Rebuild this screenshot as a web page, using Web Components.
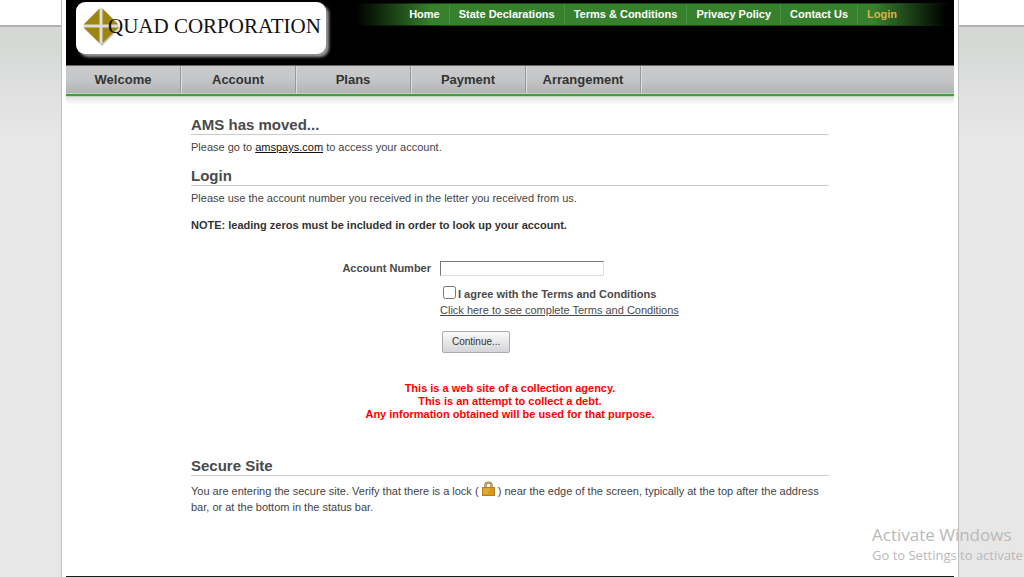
<!DOCTYPE html>
<html lang="en">
<head>
<meta charset="utf-8">
<title>Quad Corporation - Login</title>
<style>
html, body { margin: 0; }
body { font: 11px/16px "Liberation Sans", Arial, sans-serif; color: #444; background: #e7e7e7; }
</style>
</head>
<body>
<quad-page>
  <quad-header slot="header"></quad-header>
  <quad-nav slot="header"></quad-nav>
  <quad-section heading="AMS has moved...">Please go to <quad-link href="#amspays">amspays.com</quad-link> to access your account.</quad-section>
  <quad-section heading="Login">Please use the account number you received in the letter you received from us.</quad-section>
  <quad-login></quad-login>
  <quad-section heading="Secure Site" wide>You are entering the secure site. Verify that there is a lock ( <quad-lock></quad-lock> ) near the edge of the screen, typically at the top after the address <wbr>bar, or at the bottom in the status bar.</quad-section>
</quad-page>
<activation-note></activation-note>
<script>
function define(name, html) {
  const template = document.createElement('template');
  template.innerHTML = html;
  customElements.define(name, class extends HTMLElement {
    constructor() {
      super();
      this.attachShadow({ mode: 'open' }).append(template.content.cloneNode(true));
    }
    connectedCallback() {
      const title = this.shadowRoot.querySelector('[data-heading]');
      if (title) title.textContent = this.getAttribute('heading');
      const link = this.shadowRoot.querySelector('[data-link]');
      if (link) link.href = this.getAttribute('href');
    }
  });
}

define('quad-page', `<style>
:host { display: block; box-sizing: border-box; min-height: 100vh; padding-right: 4px;
  background: linear-gradient(#fff 25px, #adadad 25px, #b4b4b4 27px, #d6d8d6 27px, #d6d8d5 45px, #dadddb 70px, #e1e1e1 100px, #e7e7e7 140px); }
.shell { display: flex; flex-direction: column; box-sizing: border-box; min-height: 100vh; max-width: 898px; margin: 0 auto; padding: 0 4px; background: #fff; border: solid #c0c0c0; border-width: 0 1px; }
main { max-width: 638px; width: 100%; margin: 0 auto; padding: 10px 0 24px; }
footer { height: 1px; margin-top: auto; background: #1a1a1a; }
</style>
<div class="shell"><header><slot name="header"></slot></header><main><slot></slot></main><footer></footer></div>`);

define('quad-header', `<style>
:host { display: flex; justify-content: space-between; align-items: flex-start; height: 65px; background: #000; }
.logo { display: flex; align-items: center; box-sizing: border-box; width: 250px; height: 52px; margin: 2px 0 0 10px; padding: 0 0 4px 6px; border-radius: 9px; background: #fff; box-shadow: 3px 3px 3px #999; text-decoration: none; color: #111; font: 21px/24px "Liberation Serif", serif; white-space: nowrap; }
svg { flex: none; width: 38px; height: 40px; margin-right: -12px; }
b { position: relative; font-weight: 400; }
nav { display: flex; margin-top: 3px; padding: 0 48px 0 44px; border: solid #1d4a17; border-width: 1px 0; border-image: linear-gradient(90deg, #000, #1d4a17 15%, #1d4a17 90%, #000) 1; background: linear-gradient(90deg, #000, #37802d 75px, #37802d calc(100% - 80px), #000 calc(100% - 8px)); }
nav a { padding: 0 9px; font: bold 11px/21px "Liberation Sans", Arial, sans-serif; color: #fff; text-decoration: none; white-space: nowrap; }
nav a + a { border-left: 1px solid #4b9142; }
nav a.on { color: #dcb44a; }
</style>
<a class="logo" href="#home"><svg viewBox="0 0 38 40" aria-hidden="true">
<path d="M20 4 38 22 20 40 2 22Z" fill="#aaa" opacity=".7"/>
<path d="M19 1 37 20 19 38 1 20Z" fill="#ddd"/>
<path d="M17.500 2.500V18.500H1.500Z M20.500 2.500V18.500H36.500Z M17.500 37V21.500H1.500Z M20.500 37V21.500H36.500Z" fill="#9c8511"/></svg><b>QUAD CORPORATION</b></a>
<nav><a href="#home">Home</a><a href="#state">State Declarations</a><a href="#terms">Terms &amp; Conditions</a><a href="#privacy">Privacy Policy</a><a href="#contact">Contact Us</a><a href="#login" class="on">Login</a></nav>`);

define('quad-nav', `<style>
:host { display: block; }
nav { display: flex; border-top: 1px solid #666; background: linear-gradient(#cacbcc, #c5c6c7 50%, #b2b3b5); }
a { flex: 0 1 114px; border-right: 1px solid #999; box-shadow: 1px 0 #ddd; text-align: center; font: bold 13px/27px "Liberation Sans", Arial, sans-serif; color: #333; text-decoration: none; }
.line { height: 2px; border-top: 1px solid #bddabb; background: #3f9d3d; border-bottom: 1px solid #bddabb; }
.shade { height: 8px; background: linear-gradient(#e3e3e3, #fff); }
</style>
<nav><a href="#welcome">Welcome</a><a href="#account">Account</a><a href="#plans">Plans</a><a href="#payment">Payment</a><a href="#arrangement">Arrangement</a></nav>
<div class="line"></div><div class="shade"></div>`);

define('quad-section', `<style>
:host { display: block; }
h2 { margin: 0; border-bottom: 1px solid #ccc; font-size: 15px; line-height: 19px; color: #4a4a4a; }
p { margin: 4px 0 11px; }
:host([wide]) p { margin-top: 7px; }
</style><h2 data-heading></h2><p><slot></slot></p>`);

define('quad-link', `<style>a { color: #111; }</style><a data-link><slot></slot></a>`);

define('quad-lock', `<style>
:host { display: inline-block; width: 13px; height: 15px; margin: -4px 0 -1px; vertical-align: baseline; }
svg { display: block; }
</style><svg width="13" height="15" viewBox="0 0 13 15" role="img" aria-label="lock">
<path d="M3.500 7V4C3.500 .8 9.500 .8 9.500 4V7" fill="none" stroke="#94824c" stroke-width="2.400"/>
<path d="M3.500 7V4C3.500 .8 9.500 .8 9.500 4V7" fill="none" stroke="#d4c07c" stroke-width=".8"/>
<rect x=".5" y="6.500" width="12" height="8" fill="#d39a20" stroke="#b57d12"/>
<path d="M1 8H8M1 10H7M1 12H6" stroke="#e8b944"/></svg>`);

define('quad-login', `<style>
:host { display: block; }
p { margin: 0; font-weight: bold; color: #333; }
form { display: grid; grid-template-columns: 240px 1fr; column-gap: 9px; align-items: center; margin: 27px 0 29px; }
label { font-weight: bold; color: #4a4a4a; }
.name { text-align: right; }
input[type=text] { box-sizing: border-box; width: 164px; height: 15px; margin: 0; padding: 0 2px; border: 1px solid #ddd; border-top-color: #777; border-left-color: #777; background: #fff; }
.agree, .more, .go { grid-column: 2; }
.agree { display: flex; align-items: center; margin-top: 10px; }
input[type=checkbox] { width: 13px; height: 13px; margin: 0 2px 3px 3px; }
.more a { color: #4a4a4a; }
button { box-sizing: border-box; height: 22px; margin: 13px 0 0 2px; padding: 0 9px; border: 1px solid #a8abae; border-radius: 2px; background: linear-gradient(#fafafa, #d3d5d8); font: 10px/18px "Liberation Sans", Arial, sans-serif; color: #333; }
.notice { line-height: 13px; color: #f00; text-align: center; margin-bottom: 35px; }
</style>
<p>NOTE: leading zeros must be included in order to look up your account.</p>
<form>
<label class="name" for="number">Account Number</label><input type="text" id="number">
<div class="agree"><input type="checkbox" id="agree"><label for="agree">I agree with the Terms and Conditions</label></div>
<div class="more"><a href="#terms">Click here to see complete Terms and Conditions</a></div>
<div class="go"><button type="button">Continue...</button></div>
</form>
<p class="notice">This is a web site of a collection agency.<br>This is an attempt to collect a debt.<br>Any information obtained will be used for that purpose.</p>`);

define('activation-note', `<style>
:host { position: absolute; left: 872px; top: 523px; right: 0; height: 42px; overflow: hidden; white-space: nowrap; color: #b9b9b9; font: 13px/18px "Open Sans", "Noto Sans", sans-serif; pointer-events: none; }
.title { font-size: 17px; line-height: 23px; }
</style><div class="title">Activate Windows</div><div>Go to Settings to activate</div>`);
</script>
</body>
</html>
